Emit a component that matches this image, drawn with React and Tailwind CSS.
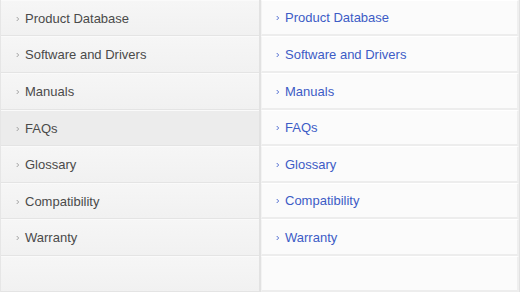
const items = [
  { label: "Product Database", h: "h-[36px]" },
  { label: "Software and Drivers", h: "h-[37px]" },
  { label: "Manuals", h: "h-[37px]" },
  { label: "FAQs", h: "h-[36px]", active: true },
  { label: "Glossary", h: "h-[37px]" },
  { label: "Compatibility", h: "h-[36px]" },
  { label: "Warranty", h: "h-[37px]" },
  { label: "", h: "h-[36px]" },
];

const Arrow = ({ color }) => (
  <svg width="4" height="6" viewBox="0 0 4 6" className="shrink-0 mt-[1px]">
    <path d="M0.7 1 L2.7 3 L0.7 5" stroke={color} strokeWidth="0.9" fill="none" />
  </svg>
);

export default function App() {
  return (
    <div
      className="w-[520px] h-[292px] overflow-hidden flex bg-[#e2e2e2]"
      style={{ fontFamily: '"Liberation Sans", Arial, sans-serif' }}
    >
      {/* left column */}
      <div className="w-[259px] flex flex-col border-l border-[#e6e6e6]">
        {items.map((it, i) => (
          <div
            key={i}
            className={`${it.h} shrink-0 flex items-center gap-[5px] pl-[15px] border-b border-[#e4e4e4] border-t border-t-[#fafafa] ${
              it.active ? "bg-[#ececec]" : "bg-gradient-to-b from-[#f6f6f6] to-[#f1f1f1]"
            }`}
          >
            {it.label && <Arrow color="#999999" />}
            <span className="text-[13px] text-[#4a4a4a] pt-[1px]">{it.label}</span>
          </div>
        ))}
      </div>
      {/* right column */}
      <div className="ml-[2px] w-[258px] flex flex-col">
        {items.map((it, i) => (
          <div
            key={i}
            className={`${it.h} shrink-0 flex items-center gap-[5px] pl-[14px] bg-[#fbfbfb] border-l border-l-[#f3f3f3] border-r-2 border-r-[#efefef] border-b-2 border-b-[#ededed] border-t border-t-white`}
          >
            {it.label && <Arrow color="#3f5fcc" />}
            <span className="text-[13px] text-[#3d5cc6] pt-[1px]">{it.label}</span>
          </div>
        ))}
      </div>
    </div>
  );
}
